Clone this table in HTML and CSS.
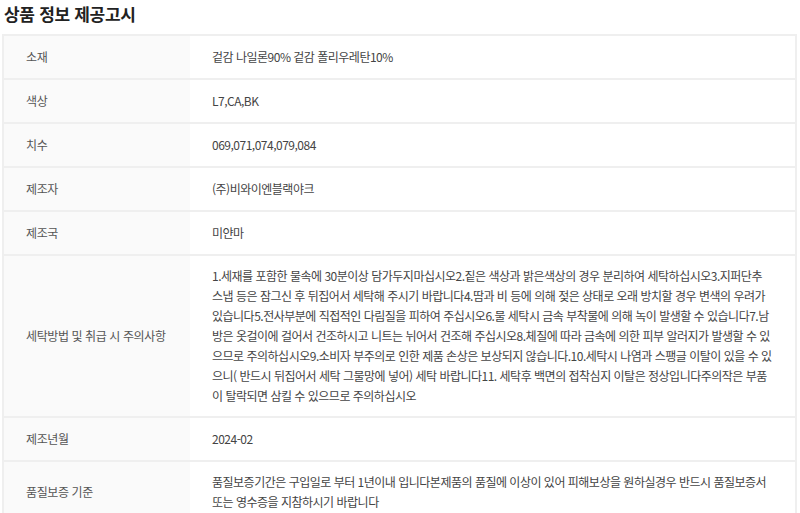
FILE: index.html
```html
<!DOCTYPE html>
<html lang="ko">
<head>
<meta charset="utf-8">
<link rel="stylesheet" href="styles.css">
</head>
<body>
<h2 class="title">상품 정보 제공고시</h2>
<table class="info">
<tr><th>소재</th><td>겉감 나일론90% 겉감 폴리우레탄10%</td></tr>
<tr><th>색상</th><td>L7,CA,BK</td></tr>
<tr><th>치수</th><td>069,071,074,079,084</td></tr>
<tr><th>제조자</th><td>(주)비와이엔블랙야크</td></tr>
<tr><th>제조국</th><td>미얀마</td></tr>
<tr><th>세탁방법 및 취급 시 주의사항</th><td>1.세재를 포함한 물속에 30분이상 담가두지마십시오2.짙은 색상과 밝은색상의 경우 분리하여 세탁하십시오3.지퍼단추 스냅 등은 잠그신 후 뒤집어서 세탁해 주시기 바랍니다4.땀과 비 등에 의해 젖은 상태로 오래 방치할 경우 변색의 우려가 있습니다5.전사부분에 직접적인 다림질을 피하여 주십시오6.물 세탁시 금속 부착물에 의해 녹이 발생할 수 있습니다7.남방은 옷걸이에 걸어서 건조하시고 니트는 뉘어서 건조해 주십시오8.체질에 따라 금속에 의한 피부 알러지가 발생할 수 있으므로 주의하십시오9.소비자 부주의로 인한 제품 손상은 보상되지 않습니다.10.세탁시 나염과 스팽글 이탈이 있을 수 있으니( 반드시 뒤집어서 세탁 그물망에 넣어) 세탁 바랍니다11. 세탁후 백면의 접착심지 이탈은 정상입니다주의작은 부품이 탈락되면 삼킬 수 있으므로 주의하십시오</td></tr>
<tr><th>제조년월</th><td>2024-02</td></tr>
<tr><th>품질보증 기준</th><td>품질보증기간은 구입일로 부터 1년이내 입니다본제품의 품질에 이상이 있어 피해보상을 원하실경우 반드시 품질보증서 또는 영수증을 지참하시기 바랍니다</td></tr>
</table>
</body>
</html>
```
FILE: styles.css
```css
html, body {
  margin: 0;
  padding: 0;
  background: #fff;
}
body {
  padding: 0 3px 0 2px;
  font-family: "Noto Sans CJK KR", "Noto Sans", sans-serif;
  color: #333;
}
.title {
  margin: 0;
  padding: 2px 0 0 2px;
  height: 34px;
  box-sizing: border-box;
  font-size: 17px;
  font-weight: 700;
  line-height: 24px;
  color: #222;
  letter-spacing: -0.3px;
}
.info {
  width: 100%;
  border-collapse: collapse;
  border: 2px solid #efefef;
  font-size: 12px;
  line-height: 20px;
}
.info th, .info td {
  border-top: 2px solid #efefef;
  padding: 10px 22px;
  height: 22px;
  vertical-align: middle;
  text-align: left;
}
.info th {
  width: 142px;
  background: #fafafa;
  font-weight: 400;
  color: #555;
  letter-spacing: -0.4px;
}
.info td {
  color: #444;
  padding-right: 22px;
  letter-spacing: -0.5px;
}
```
